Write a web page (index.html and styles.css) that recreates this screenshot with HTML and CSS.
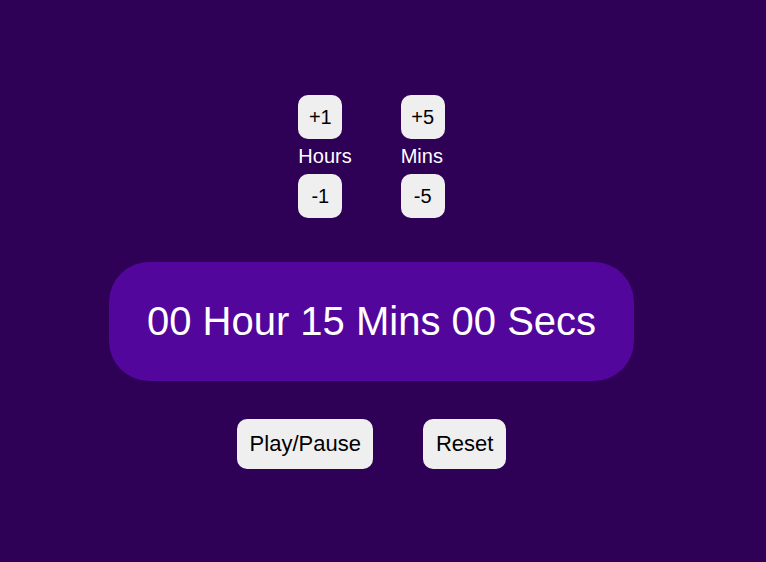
FILE: index.html
```html
<!DOCTYPE html>
<html>
<head>
<meta charset="utf-8">
<link rel="stylesheet" href="styles.css">
</head>
<body>
<div class="app">
  <div class="controls">
    <div class="col">
      <button class="small">+1</button>
      <div class="label">Hours</div>
      <button class="small">-1</button>
    </div>
    <div class="col">
      <button class="small">+5</button>
      <div class="label">Mins</div>
      <button class="small">-5</button>
    </div>
  </div>
  <div class="display">00 Hour 15 Mins 00 Secs</div>
  <div class="actions">
    <button class="big">Play/Pause</button>
    <button class="big">Reset</button>
  </div>
</div>
</body>
</html>
```
FILE: styles.css
```css
html, body {
  margin: 0;
  padding: 0;
  background: #2e0056;
  height: 100%;
}
body {
  font-family: "Liberation Sans", Arial, sans-serif;
  color: #fff;
}
.app {
  width: 743px;
  padding-top: 95px;
  display: flex;
  flex-direction: column;
  align-items: center;
}
.controls {
  display: flex;
  gap: 49px;
}
.col {
  display: flex;
  flex-direction: column;
  align-items: flex-start;
}
.label {
  font-size: 20px;
  line-height: 23px;
  margin: 6px 0;
}
button {
  font-family: "Liberation Sans", Arial, sans-serif;
  background: #efefef;
  color: #000;
  border: none;
  padding: 0;
  margin: 0;
}
.small {
  width: 44px;
  height: 44px;
  font-size: 20px;
  border-radius: 10px;
}
.display {
  margin-top: 44px;
  background: #52069b;
  border-radius: 40px;
  font-size: 40px;
  line-height: 47px;
  padding: 36px 38px;
  white-space: nowrap;
  text-align: center;
}
.actions {
  margin-top: 38px;
  display: flex;
  gap: 50px;
}
.big {
  font-size: 22px;
  line-height: 26px;
  padding: 12px 12.5px;
  border-radius: 10px;
}
```
